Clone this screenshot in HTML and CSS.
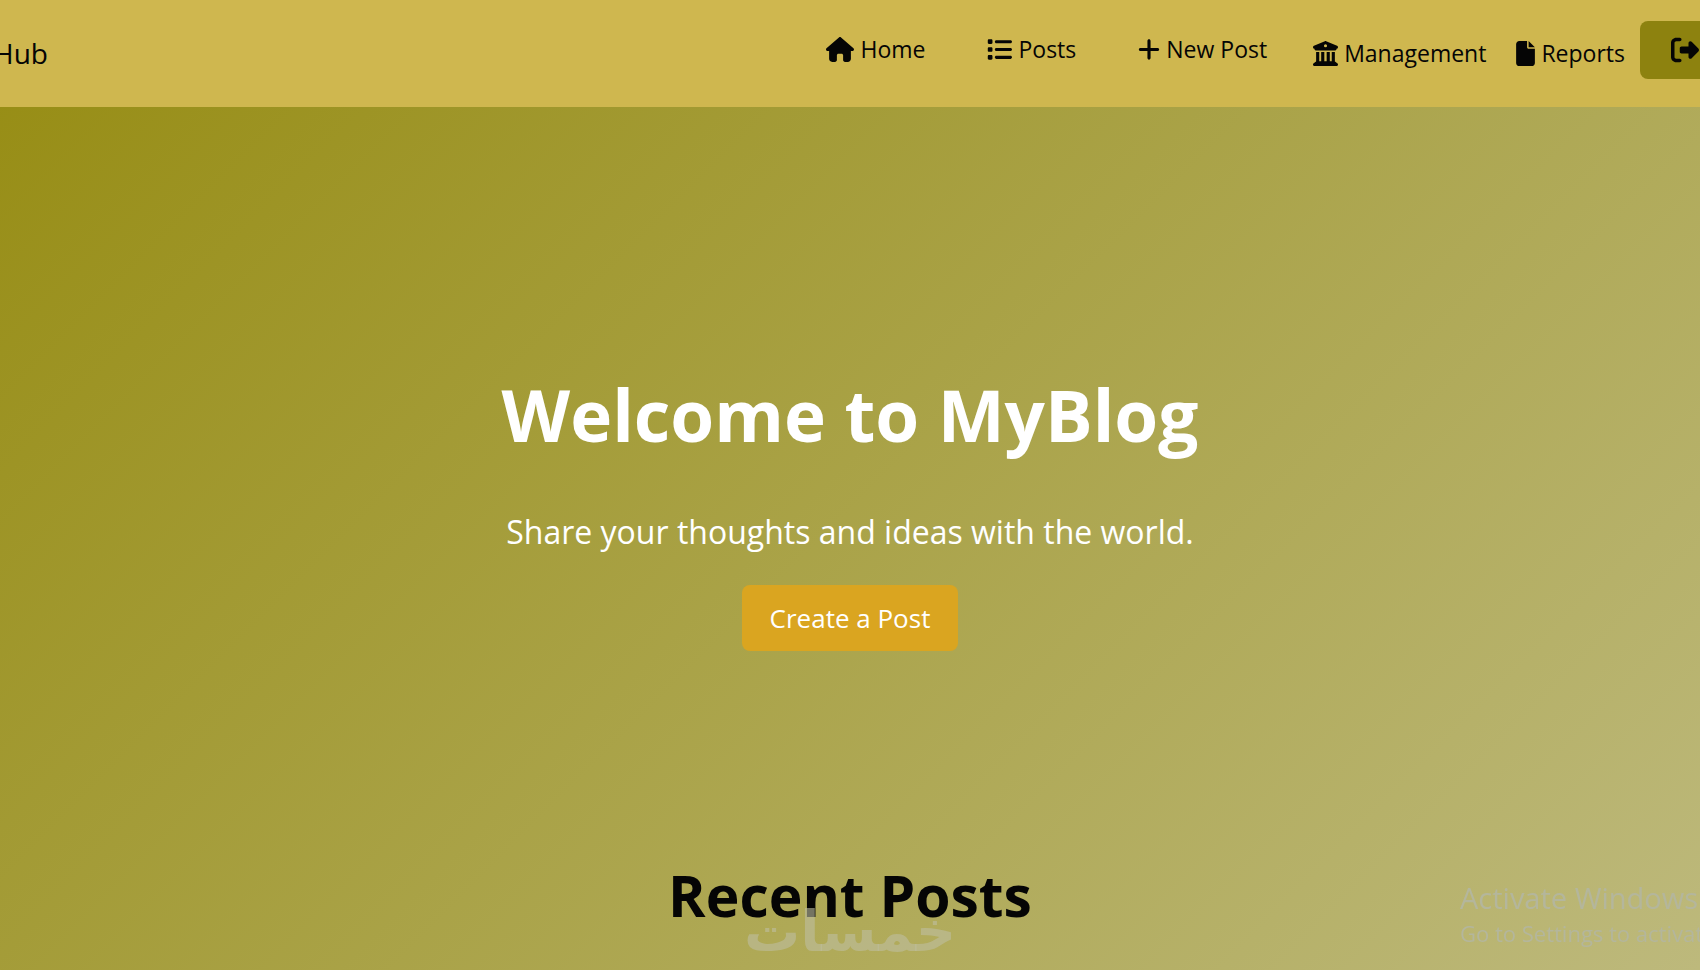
FILE: index.html
```
<!DOCTYPE html>
<html lang="en">
<head>
    <meta charset="UTF-8">
    <meta name="viewport" content="width=device-width, initial-scale=1.0">
    <title>MyBlog</title>
    <link rel="stylesheet" href="styles.css">
</head>
<body>

<header class="navbar">
    <a class="brand" href="#">Hub</a>
    <nav class="nav-links">
        <a class="nav-link" href="#">
            <svg class="icon icon-home" viewBox="0 0 576 512"><path d="M575.800 255.500c0 18-15 32.100-32 32.100h-32l.7 160.200c0 35.300-28.700 64.200-64 64.200H392c-22 0-40-18-40-40V376c0-17.700-14.300-32-32-32h-64c-17.700 0-32 14.300-32 32v96c0 22-18 40-40 40h-56c-35.300 0-64-28.700-64-64V287.600H32c-18 0-32-14-32-32.100 0-9 3-17 10-24L266.400 8c7-7 15-8 22-8s15 2 21 7l255.400 224.500c8 7 12 15 11 24z"/></svg>
            Home
        </a>
        <a class="nav-link" href="#">
            <svg class="icon" viewBox="0 0 512 512"><path d="M40 48c-13.300 0-24 10.700-24 24v48c0 13.300 10.700 24 24 24h48c13.300 0 24-10.700 24-24V72c0-13.300-10.700-24-24-24H40zm152 16c-17.700 0-32 14.300-32 32s14.300 32 32 32h288c17.700 0 32-14.300 32-32s-14.300-32-32-32H192zm0 160c-17.700 0-32 14.300-32 32s14.300 32 32 32h288c17.700 0 32-14.300 32-32s-14.300-32-32-32H192zm0 160c-17.700 0-32 14.300-32 32s14.300 32 32 32h288c17.700 0 32-14.300 32-32s-14.300-32-32-32H192zM16 232v48c0 13.300 10.700 24 24 24h48c13.300 0 24-10.700 24-24v-48c0-13.300-10.700-24-24-24H40c-13.300 0-24 10.700-24 24zm24 136c-13.300 0-24 10.700-24 24v48c0 13.300 10.700 24 24 24h48c13.300 0 24-10.700 24-24v-48c0-13.300-10.700-24-24-24H40z"/></svg>
            Posts
        </a>
        <a class="nav-link" href="#">
            <svg class="icon icon-plus" viewBox="0 0 448 512"><path d="M256 80c0-17.700-14.300-32-32-32s-32 14.300-32 32v144H48c-17.700 0-32 14.300-32 32s14.300 32 32 32h144v144c0 17.700 14.300 32 32 32s32-14.300 32-32V288h144c17.700 0 32-14.300 32-32s-14.300-32-32-32H256V80z"/></svg>
            New Post
        </a>
        <a class="nav-link nav-link-small" href="#">
            <svg class="icon" viewBox="0 0 512 512"><path fill-rule="evenodd" d="M243.400 2.600l-224 96c-14 6-21.800 21-18.700 35.800S16.800 160 32 160v8c0 13.300 10.700 24 24 24h400c13.300 0 24-10.700 24-24v-8c15.200 0 28.300-10.700 31.300-25.600s-4.800-29.900-18.700-35.800l-224-96c-8-3.400-17.200-3.400-25.200 0zM256 64a32 32 0 1 1 0 64 32 32 0 1 1 0-64zM128 224H64v196.300c-.600.300-1.200.700-1.800 1.100l-48 32c-11.700 7.800-17 22.400-12.900 35.900S17.900 512 32 512h448c14.100 0 26.500-9.200 30.600-22.700s-1.100-28.100-12.900-35.900l-48-32c-.600-.400-1.200-.700-1.800-1.100V224h-64v192h-40V224h-64v192h-48V224h-64v192h-40V224z"/></svg>
            Management
        </a>
        <a class="nav-link nav-link-small" href="#">
            <svg class="icon icon-file" viewBox="0 0 384 512"><path d="M0 64C0 28.700 28.700 0 64 0h160v128c0 17.700 14.300 32 32 32h128v288c0 35.300-28.700 64-64 64H64c-35.300 0-64-28.700-64-64V64zm384 64H256V0l128 128z"/></svg>
            Reports
        </a>
    </nav>
    <button class="logout" type="button" aria-label="Logout">
        <svg class="icon icon-logout" viewBox="0 0 512 512"><path d="M377.900 105.900L500.700 228.700c7.200 7.200 11.300 17.100 11.300 27.300s-4.100 20.100-11.300 27.300L377.900 406.100c-6.400 6.400-15 9.900-24 9.900-18.700 0-33.900-15.200-33.900-33.900V320H192c-17.700 0-32-14.300-32-32v-64c0-17.700 14.300-32 32-32h128v-62.100c0-18.700 15.200-33.900 33.900-33.900 9 0 17.600 3.600 24 9.900zM160 96H96c-17.700 0-32 14.300-32 32v256c0 17.700 14.300 32 32 32h64c17.700 0 32 14.300 32 32s-14.300 32-32 32H96c-53 0-96-43-96-96V128c0-53 43-96 96-96h64c17.700 0 32 14.300 32 32s-14.300 32-32 32z"/></svg>
    </button>
</header>

<main>
    <section class="hero">
        <h1>Welcome to MyBlog</h1>
        <p>Share your thoughts and ideas with the world.</p>
        <a class="btn" href="#">Create a Post</a>
    </section>
    <section class="recent">
        <h2>Recent Posts</h2>
    </section>
</main>

<div class="watermark" lang="ar" dir="rtl">خمسات</div>

<div class="activation">
    <div class="activation-title">Activate Windows</div>
    <div class="activation-text">Go to Settings to activate Windows.</div>
</div>

</body>
</html>
```
FILE: styles.css
```
* {
    box-sizing: border-box;
}
body {
    margin: 0;
    min-height: 100vh;
    overflow: hidden;
    font-family: "Open Sans", "Noto Sans", sans-serif;
    color: #050505;
    background: linear-gradient(135deg, #968c12, #bdb97c);
}
a {
    color: inherit;
    text-decoration: none;
}

/* Navbar */
.navbar {
    display: flex;
    height: 107px;
    padding-top: 21px;
    margin-right: -30px;
    background: #cfb74f;
}
.brand {
    margin-left: -7px;
    font-size: 28px;
    line-height: 64px;
}
.nav-links {
    display: flex;
    margin-left: auto;
}
.nav-link {
    display: flex;
    align-items: center;
    gap: 6px;
    height: 56px;
    padding: 0 31px;
    font-size: 23px;
    white-space: nowrap;
}
.nav-link-small {
    height: 64px;
    padding: 0 15px;
}
.icon {
    width: 25px;
    height: 25px;
    fill: #050505;
}
.icon-home {
    width: 28px;
}
.icon-plus {
    width: 22px;
}
.icon-file {
    width: 19px;
}
.icon-logout {
    width: 28px;
    height: 28px;
    vertical-align: middle;
}
.logout {
    width: 90px;
    height: 58px;
    padding: 0;
    border: none;
    border-radius: 8px;
    background: #8d820f;
    cursor: pointer;
}

/* Hero */
.hero {
    padding-top: 256px;
    text-align: center;
    color: #fff;
}
.hero h1 {
    margin: 0;
    font-size: 71px;
    line-height: 104px;
}
.hero p {
    margin: 40px 0 28px;
    font-size: 32px;
    line-height: 50px;
}
.btn {
    display: inline-block;
    padding: 0 28px;
    border-radius: 8px;
    font-size: 26px;
    line-height: 66px;
    background: #daa520;
}
.recent {
    margin-top: 200px;
    text-align: center;
}
.recent h2 {
    margin: 0;
    font-size: 57px;
    line-height: 88px;
}

/* Overlays */
.watermark {
    position: fixed;
    bottom: 6px;
    left: 0;
    width: 100%;
    text-align: center;
    font-family: "DejaVu Sans", sans-serif;
    font-size: 56px;
    font-weight: bold;
    line-height: 64px;
    color: rgba(190, 190, 160, 0.6);
    pointer-events: none;
}
.activation {
    position: fixed;
    right: 0;
    bottom: 22px;
    width: 240px;
    overflow: hidden;
    white-space: nowrap;
    color: #b4b69c;
    pointer-events: none;
}
.activation-title {
    font-size: 29px;
    line-height: 40px;
}
.activation-text {
    font-size: 22px;
    line-height: 30px;
}
```
